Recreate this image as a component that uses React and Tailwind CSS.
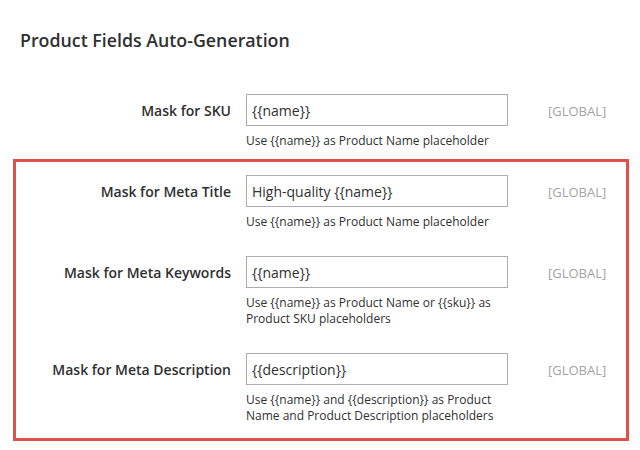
const fieldFont = { fontFamily: '"Open Sans", "Liberation Sans", sans-serif' };

function Field({ label, value, note, labelWidth }) {
  return (
    <div className="flex items-start">
      <div
        className="h-8 flex items-center justify-end pr-[15px] text-[14px] font-semibold text-[#303030]"
        style={{ width: labelWidth }}
      >
        {label}
      </div>
      <div className="w-[262px]">
        <input
          type="text"
          defaultValue={value}
          className="block w-full h-8 px-[5px] border border-[#adadad] bg-white text-[14px] text-[#303030] outline-none"
        />
        <p className="mt-[7px] text-[12px] leading-4 text-[#303030]">{note}</p>
      </div>
      <div className="h-8 flex items-center pl-10 pt-[3px] text-[13px] text-[#a3a3a3]">[GLOBAL]</div>
    </div>
  );
}

export default function App() {
  return (
    <div className="w-[640px] h-[450px] bg-white overflow-hidden pt-7" style={fieldFont}>
      <h2 className="pl-5 text-[17.8px] leading-6 font-semibold text-[#303030]">
        Product Fields Auto-Generation
      </h2>

      <div className="mt-[42px]">
        <Field
          labelWidth="246px"
          label="Mask for SKU"
          value="{{name}}"
          note="Use {{name}} as Product Name placeholder"
        />
      </div>

      <div className="mt-[10px] ml-[13px] w-[616px] border-[3px] border-[#e0514b] pt-[13px] pb-[14px] space-y-[26px]">
        <Field
          labelWidth="230px"
          label="Mask for Meta Title"
          value="High-quality {{name}}"
          note="Use {{name}} as Product Name placeholder"
        />
        <Field
          labelWidth="230px"
          label="Mask for Meta Keywords"
          value="{{name}}"
          note={
            <>
              Use {"{{name}}"} as Product Name or {"{{sku}}"} as
              <br />
              Product SKU placeholders
            </>
          }
        />
        <Field
          labelWidth="230px"
          label="Mask for Meta Description"
          value="{{description}}"
          note={
            <>
              Use {"{{name}}"} and {"{{description}}"} as Product
              <br />
              Name and Product Description placeholders
            </>
          }
        />
      </div>
    </div>
  );
}
